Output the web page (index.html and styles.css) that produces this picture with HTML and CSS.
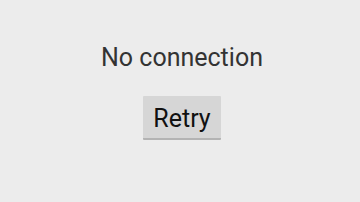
FILE: index.html
```html
<!DOCTYPE html>
<html lang="en">
<head>
    <meta charset="UTF-8">
    <meta name="viewport" content="width=device-width, initial-scale=1.0">
    <title>No connection</title>
    <link rel="stylesheet" href="styles.css">
</head>
<body>
    <div class="offline">
        <div class="message">No connection</div>
        <button class="retry">Retry</button>
    </div>
</body>
</html>
```

FILE: styles.css
```css
body {
    font-family: Roboto, "Noto Sans", sans-serif;
    margin: 0;
    background: #ececec;
    height: 202px;
}
.offline {
    display: flex;
    flex-direction: column;
    align-items: center;
    padding-top: 42px;
    padding-left: 4px;
}
.message {
    font-size: 25px;
    color: #333333;
    line-height: 32px;
}
.retry {
    margin-top: 22px;
    width: 78px;
    height: 44px;
    font-family: Roboto, "Noto Sans", sans-serif;
    font-size: 25px;
    color: #111111;
    background: #d6d6d6;
    border: none;
    border-bottom: 2px solid #b3b3b3;
    border-radius: 1px;
    padding: 2px 0 0;
}
```
